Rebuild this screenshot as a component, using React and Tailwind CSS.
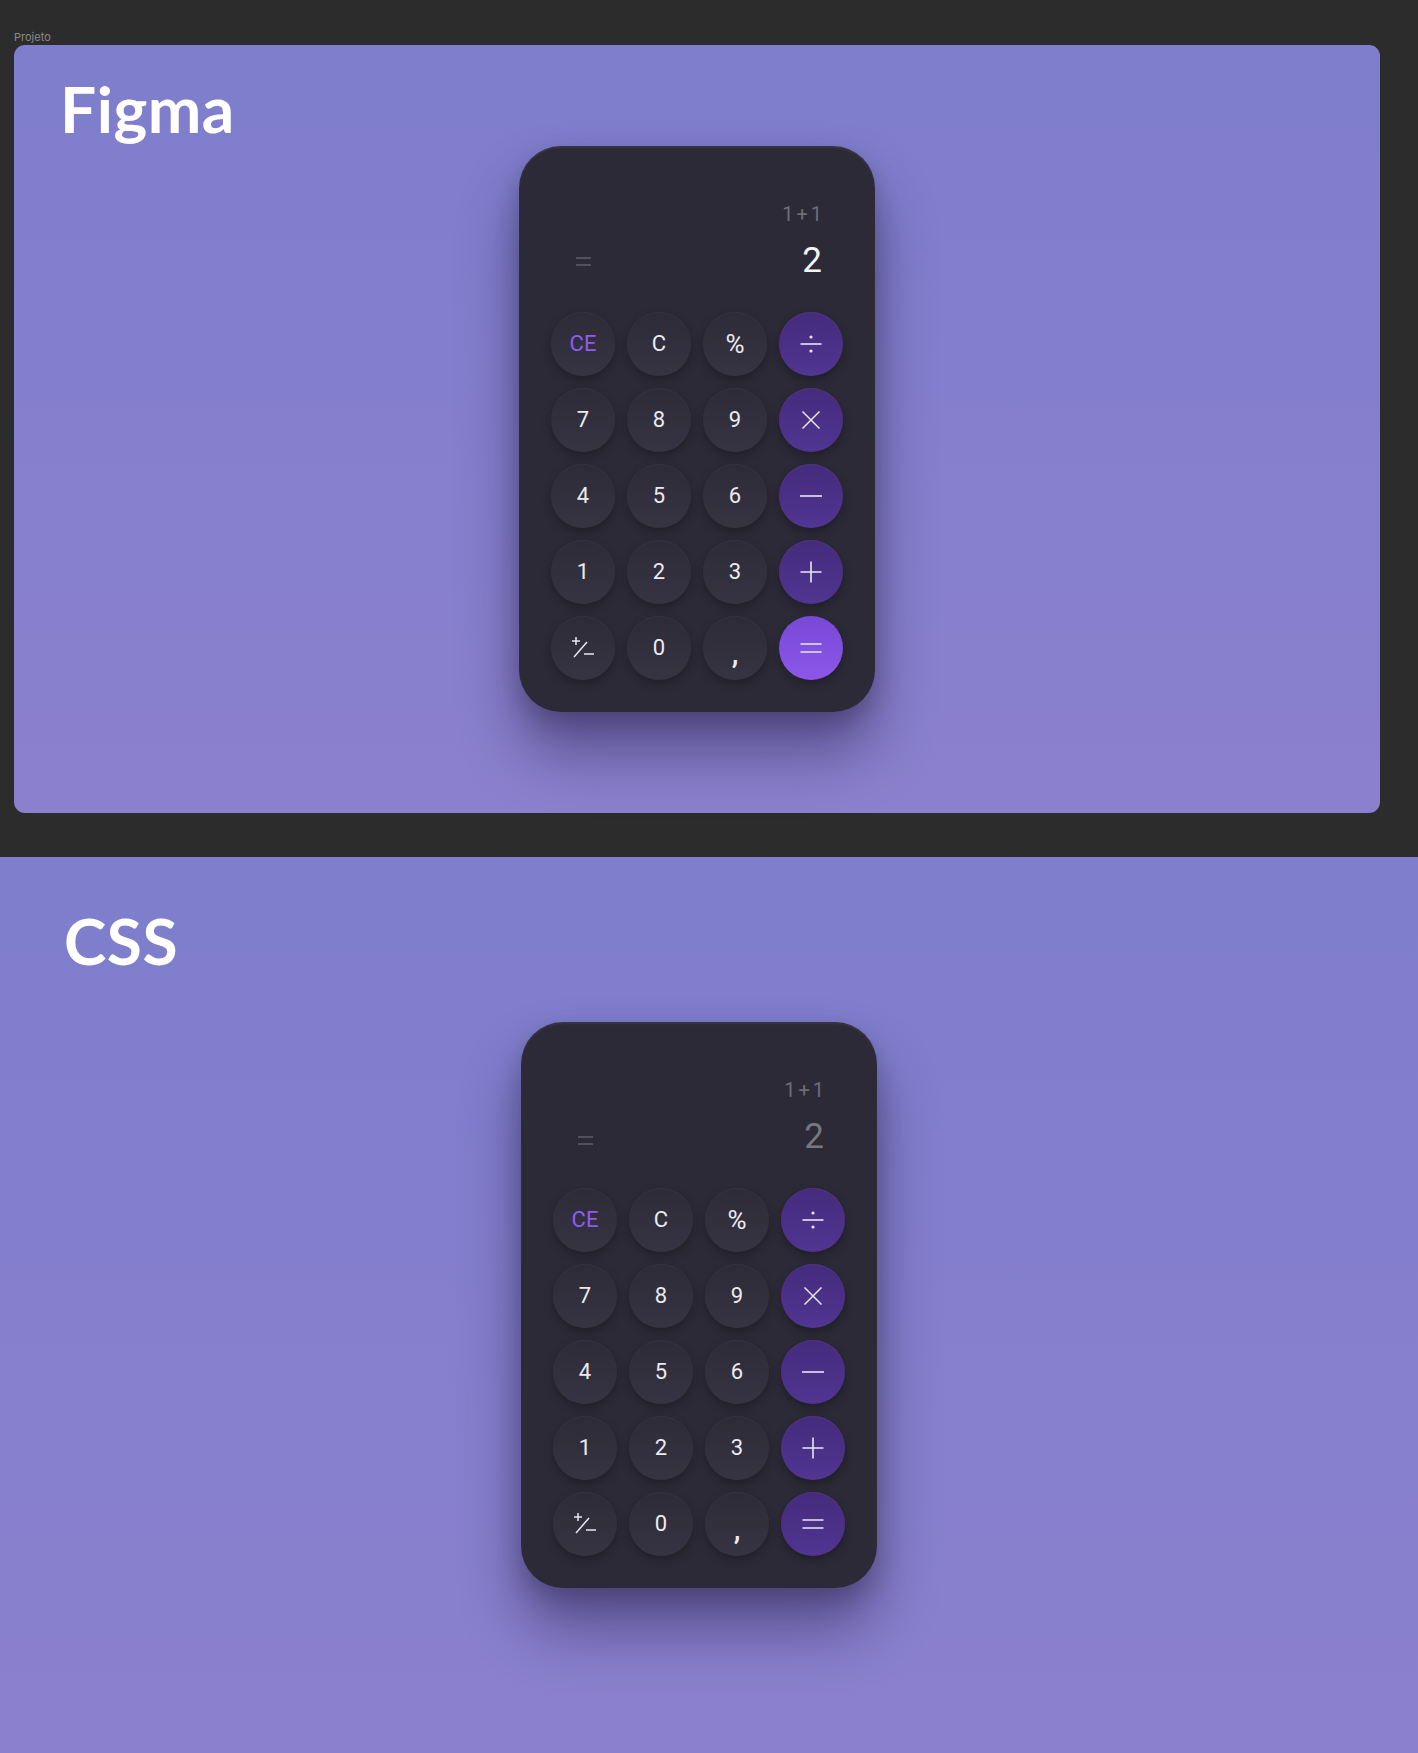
import clsx from "clsx";

const font = { fontFamily: "Roboto, 'Noto Sans', sans-serif" };

function Divide() {
  return (
    <svg width="24" height="24" viewBox="0 0 24 24" fill="none">
      <line x1="1.5" y1="12" x2="22.5" y2="12" stroke="#e9e6f2" strokeWidth="1.6" />
      <circle cx="12" cy="5" r="1.6" fill="#e9e6f2" />
      <circle cx="12" cy="19" r="1.6" fill="#e9e6f2" />
    </svg>
  );
}

function Times() {
  return (
    <svg width="24" height="24" viewBox="0 0 24 24" fill="none">
      <path d="M3.5 3.5 L20.5 20.5 M20.5 3.5 L3.5 20.5" stroke="#e9e6f2" strokeWidth="1.5" />
    </svg>
  );
}

function Minus() {
  return (
    <svg width="24" height="24" viewBox="0 0 24 24" fill="none">
      <line x1="1" y1="12" x2="23" y2="12" stroke="#e9e6f2" strokeWidth="1.6" />
    </svg>
  );
}

function Plus() {
  return (
    <svg width="24" height="24" viewBox="0 0 24 24" fill="none">
      <path d="M1.5 12 H22.5 M12 1.5 V22.5" stroke="#e9e6f2" strokeWidth="1.6" />
    </svg>
  );
}

function Equals() {
  return (
    <svg width="24" height="24" viewBox="0 0 24 24" fill="none">
      <path d="M1.5 8 H22.5 M1.5 16 H22.5" stroke="#e9e6f2" strokeWidth="1.6" />
    </svg>
  );
}

function PlusMinus() {
  return (
    <svg width="26" height="26" viewBox="0 0 26 26" fill="none">
      <path
        d="M2 6 H10 M6 2 V10 M4 22 L17 7 M14 19 H24"
        stroke="#e9e6f2"
        strokeWidth="1.5"
      />
    </svg>
  );
}

const keys = [
  { label: "CE", kind: "accent" },
  { label: "C" },
  { label: "%", kind: "percent" },
  { icon: Divide, kind: "op" },
  { label: "7" },
  { label: "8" },
  { label: "9" },
  { icon: Times, kind: "op" },
  { label: "4" },
  { label: "5" },
  { label: "6" },
  { icon: Minus, kind: "op" },
  { label: "1" },
  { label: "2" },
  { label: "3" },
  { icon: Plus, kind: "op" },
  { icon: PlusMinus },
  { label: "0" },
  { label: ",", kind: "comma" },
  { icon: Equals, kind: "equals" },
];

function Key({ item, variant }) {
  const Icon = item.icon;
  const isOp = item.kind === "op" || (item.kind === "equals" && variant === "css");
  const isEq = item.kind === "equals" && variant === "figma";
  return (
    <div
      className={clsx(
        "w-16 h-16 rounded-full flex items-center justify-center text-[22px] leading-none bg-gradient-to-b",
        isEq
          ? "from-[#7848d6] to-[#8c57ea] shadow-[0_4px_10px_rgba(0,0,0,0.28)]"
          : isOp
          ? "from-[#452b7c] to-[#503592] shadow-[0_4px_10px_rgba(0,0,0,0.3),inset_0_1px_0_rgba(255,255,255,0.05)]"
          : "from-[#2e2b39] to-[#363342] shadow-[0_4px_10px_rgba(0,0,0,0.28),inset_0_1px_0_rgba(255,255,255,0.04)]",
        item.kind === "accent" ? "text-[#8f5cf3]" : "text-[#ebeaf0]"
      )}
    >
      {Icon ? (
        <Icon />
      ) : item.kind === "comma" ? (
        <span className="text-[30px] font-medium translate-y-[5px]">,</span>
      ) : item.kind === "percent" ? (
        <span className="text-[26px]">%</span>
      ) : (
        item.label
      )}
    </div>
  );
}

function Calculator({ variant }) {
  return (
    <div
      style={font}
      className="w-[356px] h-[566px] rounded-[42px] bg-[#2c2a37] px-8 pb-8 flex flex-col shadow-[0_40px_60px_rgba(28,18,60,0.45),0_10px_25px_rgba(0,0,0,0.2),inset_0_2px_2px_rgba(255,255,255,0.06)]"
    >
      <div className="h-[166px] flex flex-col pt-[56px] pl-[25px] pr-[21px]">
        <div className="text-right text-[20px] leading-[24px] text-[#6f6d78]">
          1<span className="mx-[3px]">+</span>1
        </div>
        <div className="mt-[15px] flex items-center justify-between h-[40px]">
          <svg
            width="15"
            height="9"
            viewBox="0 0 15 9"
            className={variant === "css" ? "translate-y-[3px]" : ""}
          >
            <path d="M0 1 H15 M0 8 H15" stroke="#5f5d69" strokeWidth="1.3" />
          </svg>
          <span
            className={clsx(
              "text-[35px] leading-[40px]",
              variant === "css" ? "text-[#78767f]" : "text-[#f4f3f7]"
            )}
          >
            2
          </span>
        </div>
      </div>
      <div className="grid grid-cols-4 gap-3">
        {keys.map((k, i) => (
          <Key key={i} item={k} variant={variant} />
        ))}
      </div>
    </div>
  );
}

export default function App() {
  return (
    <div className="min-h-screen bg-[#2c2c2c]" style={{ fontFamily: "Lato, sans-serif" }}>
      <div
        className="pt-[32px] pl-[14px] pb-[2px] text-[11px] leading-[11px] text-[#8a8a8a]"
        style={{ fontFamily: "Inter, sans-serif" }}
      >
        Projeto
      </div>
      <div className="ml-[14px] w-[1366px] h-[768px] rounded-[11px] bg-gradient-to-b from-[#7e7ecd] to-[#8b80cd] pt-[32px]">
        <h1 className="pl-[46px] text-[64px] leading-[64px] font-bold tracking-[0.5px] text-white">
          Figma
        </h1>
        <div className="mt-[5px] flex justify-center">
          <Calculator variant="figma" />
        </div>
      </div>
      <div className="mt-[44px] h-[896px] bg-gradient-to-b from-[#7e7ecd] to-[#8b80cd] pt-[52px]">
        <h1 className="pl-[64px] text-[64px] leading-[64px] font-bold tracking-[0.5px] text-white">
          CSS
        </h1>
        <div className="mt-[49px] flex justify-center pr-5">
          <Calculator variant="css" />
        </div>
      </div>
    </div>
  );
}
